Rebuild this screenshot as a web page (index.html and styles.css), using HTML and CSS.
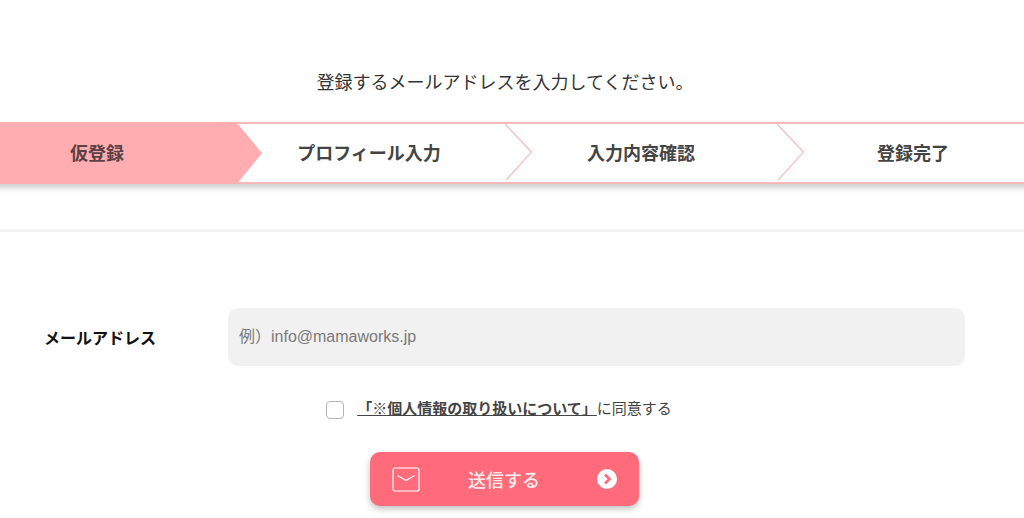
FILE: index.html
```html
<!DOCTYPE html>
<html lang="ja">
<head>
<meta charset="utf-8">
<title>仮登録</title>
<link rel="stylesheet" href="styles.css">
</head>
<body>
<main class="page">
  <p class="lead">登録するメールアドレスを入力してください。</p>
  <ol class="steps">
    <li class="step step-active">仮登録
      <svg class="tip" viewBox="0 0 28 62" preserveAspectRatio="none"><path d="M0 0L26 31L1 62H0Z" fill="#ffadb0"/></svg>
    </li>
    <li class="step">プロフィール入力
      <svg class="tip" viewBox="0 0 28 62" preserveAspectRatio="none"><path d="M0 0L26.500 30L1 60" fill="#fff" stroke="#f0bfc2" stroke-width="1.400"/></svg>
    </li>
    <li class="step">入力内容確認
      <svg class="tip" viewBox="0 0 28 62" preserveAspectRatio="none"><path d="M0 0L26.500 30L1 60" fill="#fff" stroke="#f0bfc2" stroke-width="1.400"/></svg>
    </li>
    <li class="step">登録完了</li>
  </ol>
  <hr class="rule">
  <form class="form">
    <div class="field">
      <label class="field-label" for="email">メールアドレス</label>
      <input class="field-input" id="email" type="email" placeholder="例）info@mamaworks.jp">
    </div>
    <div class="agree">
      <span class="check"></span>
      <span class="agree-text"><a class="agree-link" href="#">「※個人情報の取り扱いについて」</a>に同意する</span>
    </div>
    <button class="submit" type="button">
      <svg class="mail" viewBox="0 0 28 25"><rect x="1" y="1" width="26" height="23" rx="2" fill="none" stroke="#fff" stroke-width="1.200"/><path d="M5.500 8.500L14 13.500L22.500 8.500" fill="none" stroke="#fff" stroke-width="1.200"/></svg>
      <span class="submit-label">送信する</span>
      <svg class="go" viewBox="0 0 20 20"><circle cx="10" cy="10" r="10" fill="#fff"/><path d="M8 5.500L12.500 10L8 14.500" fill="none" stroke="#ff6b7a" stroke-width="2.600"/></svg>
    </button>
  </form>
</main>
</body>
</html>
```

FILE: styles.css
```css
* { box-sizing: border-box; }
html, body { margin: 0; padding: 0; }
body {
  width: 1024px;
  height: 518px;
  overflow: hidden;
  background: #fff;
  color: #3c3c3c;
  font-family: "Liberation Sans", "Noto Sans CJK JP", sans-serif;
}
.page { padding-top: 70px; }
.lead {
  margin: 0 0 26px;
  padding-right: 14px;
  height: 26px;
  font-size: 18px;
  line-height: 26px;
  text-align: center;
  color: #333;
}
.steps {
  display: grid;
  grid-template-columns: repeat(4, 272px);
  width: 1088px;
  height: 62px;
  margin: 0 0 0 -39px;
  padding: 0;
  list-style: none;
  border-top: 2px solid #f7b8ba;
  border-bottom: 2px solid #f7b8ba;
  box-shadow: 0 4px 5px rgba(90, 90, 90, 0.28);
  background: #fff;
}
.step {
  position: relative;
  display: flex;
  align-items: center;
  justify-content: center;
  padding-bottom: 3px;
  font-size: 18px;
  font-weight: 700;
  color: #444;
}
.step-active {
  margin: -2px -3px -2px 0;
  padding-right: 3px;
  padding-bottom: 2px;
  background: #ffadb0;
  color: #5c4044;
}
.tip {
  position: absolute;
  top: 0;
  left: 100%;
  width: 28px;
  height: 100%;
  z-index: 1;
}
.rule {
  height: 3px;
  margin: 45px 0 0;
  border: 0;
  background: #f2f2f2;
}
.form { padding-top: 76px; }
.field {
  display: flex;
  align-items: center;
  margin-bottom: 33px;
}
.field-label {
  width: 228px;
  padding-left: 44px;
  font-size: 16px;
  font-weight: 700;
  color: #111;
}
.field-input {
  width: 737px;
  height: 58px;
  padding: 0 11px;
  border: 0;
  border-radius: 10px;
  background: #f1f1f1;
  font-family: inherit;
  font-size: 16px;
}
.field-input::placeholder { color: #7a7a7a; opacity: 1; }
.agree {
  display: flex;
  align-items: center;
  justify-content: center;
  height: 20px;
  margin-bottom: 33px;
  padding-right: 26px;
}
.check {
  width: 18px;
  height: 18px;
  margin: 2px 13px 0 0;
  border: 1px solid #b5b5b5;
  border-radius: 4px;
  background: #fff;
}
.agree-text { padding-bottom: 3px; font-size: 15px; color: #444; }
.agree-link { font-weight: 700; color: #444; text-decoration: underline; }
.submit {
  display: flex;
  align-items: center;
  width: 269px;
  height: 54px;
  margin-left: 370px;
  padding: 0 22px;
  border: 0;
  border-radius: 10px;
  background: #ff6b7a;
  box-shadow: 0 3px 6px rgba(0, 0, 0, 0.25);
  color: #fff;
  font-family: inherit;
}
.mail { width: 28px; height: 25px; flex: none; }
.submit-label {
  flex: 1;
  padding-right: 9px;
  font-size: 18px;
  font-weight: 500;
  text-align: center;
  color: #fdeeee;
}
.go { width: 20px; height: 20px; flex: none; }
```
